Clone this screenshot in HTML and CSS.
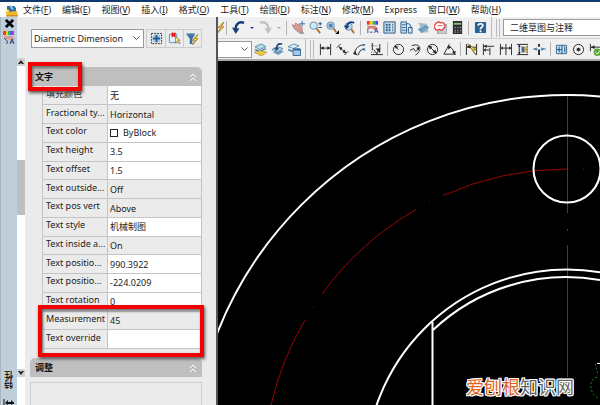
FILE: index.html
```html
<!DOCTYPE html>
<html lang="zh-CN">
<head>
<meta charset="utf-8">
<title>AutoCAD</title>
<link rel="stylesheet" href="styles.css">
</head>
<body>
<div class="app">
  <nav class="menubar">
    <svg class="app-icon" viewBox="0 0 12 13"><path d="M1 2h7l2 2v5H1z" fill="#2d6ca5"/><path d="M3 1l3 1 2 4-3-1z" fill="#8fc2e6"/><path d="M0 5l3 1v6H0z" fill="#ffe57a"/><path d="M0 8l11-1 1 5H1z" fill="#f3b72e"/><path d="M0 12h12" stroke="#a87010"/></svg>
    <a href="#">文件(<u>F</u>)</a>
    <a href="#">编辑(<u>E</u>)</a>
    <a href="#">视图(<u>V</u>)</a>
    <a href="#">插入(<u>I</u>)</a>
    <a href="#">格式(<u>O</u>)</a>
    <a href="#">工具(<u>T</u>)</a>
    <a href="#">绘图(<u>D</u>)</a>
    <a href="#">标注(<u>N</u>)</a>
    <a href="#">修改(<u>M</u>)</a>
    <a href="#">Express</a>
    <a href="#">窗口(<u>W</u>)</a>
    <a href="#">帮助(<u>H</u>)</a>
  </nav>
  <div class="workspace">
    <aside class="palette">
      <div class="palette-title">
        <button aria-label="关闭"><svg viewBox="0 0 10 10"><path d="M1 1l8 8M9 1L1 9" stroke="#050505" stroke-width="3"/></svg></button>
        <svg class="props-icon" viewBox="0 0 12 14"><path d="M0 0h3v4H0z" fill="#f33"/><path d="M3 0h2v4H3z" fill="#fc0"/><path d="M5 0h2v4H5z" fill="#2b4"/><path d="M7 0h2v4H7z" fill="#27e"/><path d="M9 0h2v4H9z" fill="#b3d"/><path d="M1 5h8l3 3-3 2-3-2-4 1z" fill="#d59a96"/><path d="M1 7l4 4M3 12h2M7 13l2-5 2 5M8 11h3" stroke="#36426b" fill="none"/></svg>
        <span class="vertical-title">特性</span>
        <svg class="dock-icon" viewBox="0 0 12 6"><path d="M1 0v6" stroke="#111"/><path d="M2 4l3-3v5zM11 4L8 1v5z" fill="#111"/><path d="M3 4h8" stroke="#111" stroke-width="2"/></svg>
      </div>
      <div class="scroll">
        <button aria-label="向上"><svg viewBox="0 0 8 8"><path d="M1 6l3-4 3 4H5L4 5 3 6z" fill="#222"/></svg></button>
        <div class="track"><div class="thumb"></div></div>
        <button aria-label="向下"><svg viewBox="0 0 8 8"><path d="M1 2l3 4 3-4H5L4 3 3 2z" fill="#222"/></svg></button>
      </div>
      <div class="properties">
        <div class="picker">
          <select aria-label="对象类型"><option>Diametric Dimension</option></select>
          <div class="picker-tools">
            <button aria-label="切换"><svg viewBox="0 0 14 14"><path d="M1.500 1.500h11v11h-11z" fill="none" stroke="#333" stroke-dasharray="2 1"/><path d="M3 3h8v8H3z" fill="#a9cbe8"/><path d="M7 3v8M3 7h8" stroke="#245b91" stroke-width="2"/></svg></button>
            <button aria-label="选择对象"><svg viewBox="0 0 14 14"><path d="M1.500 2.500h8v9h-8z" fill="#e4eef6" stroke="#6689a5"/><path d="M4 1l4 4M8 1L4 5" stroke="#e11" stroke-width="2"/><path d="M8 5v7l2-2 2 3 1-1-2-3h2z" fill="#ffe68a" stroke="#555" stroke-width=".6"/></svg></button>
            <button aria-label="快速选择"><svg viewBox="0 0 14 14"><path d="M0 2q5-2 10 0L7 7v6H4V7z" fill="#3c719d"/><path d="M1 2h8" stroke="#8db8d8"/><path d="M12 3L7 9h3l-3 5 6-7h-3l3-4z" fill="#f8d43c" stroke="#98700c" stroke-width=".7"/></svg></button>
          </div>
        </div>
        <section>
          <h2 class="group-title">文字<svg viewBox="0 0 8 10"><path d="M1 5l3-3 3 3M1 9l3-3 3 3"/></svg></h2>
          <table>
            <tr><th><label for="fill">填充颜色</label></th><td><input id="fill" value="无"></td></tr>
            <tr class="fixed"><th>Fractional ty...</th><td>Horizontal</td></tr>
            <tr><th><label for="color">Text color</label></th><td><div class="color-value"><span class="swatch"></span><input id="color" value="ByBlock"></div></td></tr>
            <tr><th><label for="height">Text height</label></th><td><input id="height" value="3.5"></td></tr>
            <tr><th><label for="offset">Text offset</label></th><td><input id="offset" value="1.5"></td></tr>
            <tr class="fixed"><th>Text outside...</th><td>Off</td></tr>
            <tr class="fixed"><th>Text pos vert</th><td>Above</td></tr>
            <tr><th><label for="style">Text style</label></th><td><input id="style" value="机械制图"></td></tr>
            <tr class="fixed"><th>Text inside a...</th><td>On</td></tr>
            <tr><th><label for="posx">Text positio...</label></th><td><input id="posx" value="990.3922"></td></tr>
            <tr><th><label for="posy">Text positio...</label></th><td><input id="posy" value="-224.0209"></td></tr>
            <tr><th><label for="rotation">Text rotation</label></th><td><input id="rotation" value="0"></td></tr>
            <tr class="fixed"><th>Measurement</th><td>45</td></tr>
            <tr><th><label for="override">Text override</label></th><td><input id="override" value=""></td></tr>
          </table>
        </section>
        <section class="fit-group">
          <h2 class="group-title">调整<svg viewBox="0 0 8 10"><path d="M1 5l3-3 3 3M1 9l3-3 3 3"/></svg></h2>
          <div class="hint"></div>
        </section>
      </div>
    </aside>
    <main>
      <div class="toolbar standard">
        <button class="half" aria-label="闪电"><svg viewBox="7 0 7 14"><path d="M13 1L7 7h3l-3 6 7-7h-3l3-5z" fill="#f6c531" stroke="#806018" stroke-width=".7"/></svg></button>
        <i class="sep"></i>
        <button aria-label="放弃"><svg viewBox="0 0 14 14"><path d="M13 2C8 0 4 3 4 8" fill="none" stroke="#173f7c" stroke-width="2.500"/><path d="M0 7l8 1-4 6z" fill="#173f7c"/></svg></button>
        <button class="drop" aria-label="放弃列表"><svg viewBox="0 0 4 4"><path d="M0 1h4L2 3z" fill="#173f7c"/></svg></button>
        <button aria-label="重做"><svg viewBox="0 0 14 14"><path d="M1 2c5-2 9 1 9 6" fill="none" stroke="#bfc3c6" stroke-width="2.500"/><path d="M6 8l8-1-4 7z" fill="#bfc3c6"/></svg></button>
        <button class="drop" aria-label="重做列表"><svg viewBox="0 0 4 4"><path d="M0 1h4L2 3z" fill="#aaa"/></svg></button>
        <i class="sep"></i>
        <button aria-label="平移"><svg viewBox="0 0 14 14"><path d="M0 4l3 1 1-3 2 2 2-1 3 5v4H7L3 9z" fill="#d59a93" stroke="#8f5c59" stroke-width=".6"/><path d="M11 0v6M8 3h6M8 13h5" stroke="#3c6894"/></svg></button>
        <button aria-label="实时缩放"><svg viewBox="0 0 14 14"><circle cx="5" cy="5" r="4" fill="#cde7f7" stroke="#668da9"/><path d="M8 8l4 5" stroke="#ae7038" stroke-width="2"/><path d="M12 1v4M10 3h4M10 7h4" stroke="#234f82"/></svg></button>
        <button aria-label="窗口缩放"><svg viewBox="0 0 14 14"><circle cx="5" cy="5" r="4" fill="#bbd6e9" stroke="#668da9"/><path d="M3 3h4v4H3z" fill="#4a82b5"/><path d="M8 8l3 4" stroke="#ae7038" stroke-width="2"/><path d="M14 10v4h-4z"/></svg></button>
        <button aria-label="缩放上一个"><svg viewBox="0 0 14 14"><circle cx="6" cy="6" r="4" fill="#bbd6e9" stroke="#668da9"/><path d="M9 9l3 4" stroke="#ae7038" stroke-width="2"/><path d="M12 2C8 0 5 2 4 6" fill="none" stroke="#173f7c" stroke-width="2"/><path d="M1 5h6l-3 4z" fill="#173f7c"/></svg></button>
        <i class="sep"></i>
        <button aria-label="特性"><svg viewBox="0 0 14 14"><path d="M1 0h3v4H1z" fill="#e33"/><path d="M4 0h3v4H4z" fill="#fc0"/><path d="M7 0h3v4H7z" fill="#3b6"/><path d="M10 0h3v4h-3z" fill="#63d"/><path d="M1 5h9l3 3-3 2-4-2-4 1z" fill="#d8847e"/><path d="M2 8v5M4 12h3M9 13l2-5 2 5M10 11h3" stroke="#354e86" fill="none"/></svg></button>
        <button aria-label="设计中心"><svg viewBox="0 0 14 14"><path d="M1 1h12v12H1z" fill="#d5e7f5" stroke="#234d75"/><path d="M3 4h2M6 4h2M10 4h1M3 7h2M6 7h2M10 7h1M3 10h2M6 10h2M10 10h1" stroke="#245c8c" stroke-width="2"/></svg></button>
        <button aria-label="工具选项板"><svg viewBox="0 0 14 14"><path d="M1 1h6v12H1z" fill="#c8dff0" stroke="#315e8a"/><path d="M2 4h4M2 7h4M2 10h4" stroke="#396b99"/><path d="M7 3q5-1 5 5M9 7h4v6H9z" fill="#d9e7f2" stroke="#245485"/></svg></button>
        <button aria-label="图纸集"><svg viewBox="0 0 14 14"><path d="M1 2l9 1 3 4-9-1z" fill="#9eb9c9"/><path d="M1 9l8-4 4 2-8 6z" fill="#438fc1"/><path d="M3 5l9 2v5l-8 1z" fill="#87a6b8" opacity=".7"/></svg></button>
        <button aria-label="标记集"><svg viewBox="0 0 14 14"><path d="M4 4h10v10H4z" fill="#c6cbd0" stroke="#89939c"/><path d="M3 2q2-2 4 0 4-1 4 2 2 3-1 4-1 3-4 1-4 2-5-1-2-3 0-4z" fill="#fff" stroke="#e44848" stroke-width="1.500"/><path d="M4 5h5" stroke="#e44848"/></svg></button>
        <button aria-label="计算器"><svg viewBox="0 0 14 14"><path d="M2 0h10v14H2z" fill="#2e3031"/><path d="M3 2h8v2H3z" fill="#86bf79"/><path d="M4 7h1M7 7h1M10 7h1M4 10h1M7 10h1M10 10h1M4 12h1M7 12h1" stroke="#e8e8e8"/><path d="M10 12h1" stroke="#f44"/></svg></button>
        <i class="sep"></i>
        <button aria-label="帮助"><svg viewBox="0 0 14 14"><rect x="1" y="1" width="12" height="12" rx="1" fill="#286395"/><path d="M4.500 5q0-2 2.500-2t2.500 2q0 1-2.500 3v1M7 10v2" fill="none" stroke="#fff" stroke-width="1.800"/></svg></button>
        <i class="edge"></i><i class="grip"></i>
        <input class="workspace-name" aria-label="工作空间" value="二维草图与注释">
      </div>
      <div class="toolbar dimension">
        <select class="layer" aria-label="图层"><option></option></select>
        <button aria-label="图层置为当前"><svg viewBox="0 0 14 14"><path d="M1 4l7-3 5 3-7 3z" fill="#b8d9ec" stroke="#5c8dab"/><path d="M1 7l5 2 7-3" fill="none" stroke="#4a81a5" stroke-width="1.500"/><path d="M0 10l7-2 7 2-6 4z" fill="#e6c849" stroke="#937b22" stroke-width=".5"/></svg></button>
        <button aria-label="上一个图层"><svg viewBox="0 0 14 14"><path d="M2 10l5-3 7 2-6 4z" fill="#6b9dbc"/><path d="M1 7l6-3 6 2-6 4z" fill="#b8d9ec" stroke="#5c8dab"/><path d="M12 1Q6 0 6 6" fill="none" stroke="#294e82" stroke-width="2"/><path d="M3 5h6l-3 4z" fill="#294e82"/></svg></button>
        <button aria-label="图层状态"><svg viewBox="0 0 14 14"><path d="M0 4l6-3 6 2-6 3z" fill="#d9ecf7" stroke="#5c8dab"/><path d="M0 7l5 2" stroke="#5c8dab" stroke-width="2"/><path d="M5.500 6.500h8v7h-8z" fill="#a9c8e0" stroke="#2b638f"/><path d="M6 7h7" stroke="#2565a1" stroke-width="2"/></svg></button>
        <i class="edge"></i><i class="grip"></i>
        <button aria-label="线性"><svg viewBox="0 0 14 14" class="ink"><path d="M1.500 1v12M12.500 1v12M2 5.500h10"/><path d="M2 5.500l3-2v4zM12 5.500l-3-2v4z" class="solid"/></svg></button>
        <button aria-label="对齐"><svg viewBox="0 0 14 14" class="ink"><path d="M1 5l4-4M9 13l4-4M3 4l8 7"/><path d="M3 4l4 1-2 3zM11 11l-4-1 2-3z" class="solid"/></svg></button>
        <button aria-label="弧长"><svg viewBox="0 0 14 14" class="ink"><path d="M2 12C2 6 6 2 12 2M6 13q0-5 6-7M0 11l5 2"/><path d="M1 12l1-4 2 4z" class="solid"/><path d="M11 1h2v2h-2zM11 6h2v2h-2z" fill="#2375ad" stroke="none"/></svg></button>
        <button aria-label="坐标"><svg viewBox="0 0 14 14" class="ink"><path d="M2.500 0v8M10.500 1v6M1 12.500h13M4 7l4 5M10 6l-3 6"/><path d="M1 3h8M1 10h6" stroke="#397ba8" stroke-dasharray="1 1"/><path d="M6 6h5v5z" class="solid"/></svg></button>
        <i class="sep"></i>
        <button aria-label="半径"><svg viewBox="0 0 14 14" class="ink"><circle cx="7" cy="7" r="5.500"/><path d="M7 7L3 4"/><path d="M3 3l4 1-3 2z" class="solid"/></svg></button>
        <button aria-label="折弯"><svg viewBox="0 0 14 14" class="ink"><path d="M3 3c9-4 12 5 4 10M1 8l4-2 2 3 4-3"/><path d="M8 5l4-1-2 4z" class="solid"/></svg></button>
        <button aria-label="直径"><svg viewBox="0 0 14 14" class="ink"><circle cx="7" cy="7" r="5.500"/><path d="M3 3l8 8"/><path d="M3 3l4 1-3 3zM11 11l-4-1 3-3z" class="solid"/></svg></button>
        <button aria-label="角度"><svg viewBox="0 0 14 14" class="ink"><path d="M7 1L1 12h13M6 4q5 1 6 7"/><path d="M5 3l4 1-3 3zM10 9h4l-2 4z" class="solid"/></svg></button>
        <i class="sep"></i>
        <button aria-label="快速标注"><svg viewBox="0 0 14 14" class="ink"><path d="M1.500 1v12M12.500 1v12M2 4.500h10"/><path d="M3 1l9 6-4 1 4 5z" fill="#f0d534" stroke="#867612"/><path d="M2 4l4-2v4z" class="solid"/></svg></button>
        <button aria-label="基线"><svg viewBox="0 0 14 14" class="ink"><path d="M1.500 1v12M8.500 5v8M2 3.500h11M2 7.500h6"/><path d="M2 3.500l3-2v4zM2 7.500l2-2v4z" class="solid"/></svg></button>
        <button aria-label="连续"><svg viewBox="0 0 14 14" class="ink"><path d="M1.500 1v12M7.500 1v12M13.500 1v12M2 5.500h11"/><path d="M2 5.500l2-2v4zM13 5.500l-2-2v4z" class="solid"/></svg></button>
        <button aria-label="等距标注"><svg viewBox="0 0 14 14" class="ink"><path d="M1 1.500h12M1 12.500h12M3.500 2v10"/><path d="M6 4h6v6H6z" fill="#e3b85e" stroke="none"/><path d="M6 4h3v6H6z" fill="#346b9a" stroke="none"/><path d="M12 3v8" stroke-dasharray="2 1"/><path d="M2 4l2-2 1 2zM2 10l2 2 1-2z" class="solid"/></svg></button>
        <button aria-label="折断标注"><svg viewBox="0 0 14 14" class="ink"><path d="M6.500 1v3M6.500 7v6" stroke-width="2"/><path d="M0 6.500h5M9 6.500h5" stroke="#3d7ead"/><path d="M1 6.500l3-2v4zM12 6.500l-3-2v4z" fill="#3d7ead" stroke="none"/></svg></button>
        <i class="sep"></i>
        <button aria-label="公差"><svg viewBox="0 0 14 14"><path d="M1.500 2.500h11v9h-11z" fill="#c5dff1" stroke="#34668f"/><path d="M7.500 2v10M4.500 4v6M2 7h5M10.500 4v6" stroke="#174d7b"/></svg></button>
        <button aria-label="圆心标记"><svg viewBox="0 0 14 14" class="ink"><circle cx="7" cy="7" r="5.500"/><path d="M7 5v4M5 7h4" stroke-width="2"/></svg></button>
        <button aria-label="检验"><svg viewBox="0 0 14 14" class="ink"><path d="M1.500 1v8M2 4.500h12"/><path d="M2 4.500l4-2v4z" class="solid"/><circle cx="9" cy="10" r="4" fill="#58a938" stroke="none"/><path d="M7 10l2 2 3-4" stroke="#fff"/></svg></button>
      </div>
      <div class="canvas">
        <svg viewBox="218 61 382 344" preserveAspectRatio="xMinYMin slice">
          <g fill="none" stroke="#c40808" stroke-width="1">
            <path d="M567.500 96v117M567.500 229v2M567.500 245v132"/>
            <path d="M567 169A302 302 0 0 0 443 195.600M416 209.600A302 302 0 0 0 322 294M305 320A302 302 0 0 0 271 405" stroke="#980505"/>
            <path d="M429 202h1M313 307h1M583 169h1M599 170h1" stroke="#980505"/>
          </g>
          <g fill="none" stroke="#fff" stroke-width="2">
            <circle cx="567" cy="471" r="376"/>
            <circle cx="567" cy="169" r="33.500"/>
            <circle cx="567" cy="471" r="201.500"/>
            <path d="M433 330A194 194 0 0 1 600 280M432.500 322v83"/>
            <path d="M597 363.500h3" stroke-width="1"/>
          </g>
          <path d="M595 364q2 5 3 12M597 377c-8 2-9 15 1 21" fill="none" stroke="#079a18" stroke-dasharray="2 2"/>
        </svg>
        <div class="watermark"><span>爱刨根</span>知识网</div>
      </div>
    </main>
  </div>
  <div class="mark mark-heading"></div>
  <div class="mark mark-override"></div>
</div>
</body>
</html>
```
FILE: styles.css
```css
* { box-sizing: border-box; }
body {
  margin: 0;
  font: 9px/12px "Noto Sans", "Noto Sans CJK SC", sans-serif;
  color: #222;
}
button, input, select { font: inherit; color: inherit; }
button {
  display: flex;
  align-items: center;
  justify-content: center;
  flex: none;
  padding: 0;
  border: 0;
  background: none;
}
svg { display: block; }
.app {
  position: relative;
  display: flex;
  flex-direction: column;
  height: 100vh;
  overflow: hidden;
  background: #f0f0f0;
}
.menubar {
  display: flex;
  flex: none;
  align-items: center;
  gap: 11px;
  height: 17px;
  padding: 1px 6px 0;
  border-top: 2px solid #103a6e;
  background: #fff;
  white-space: nowrap;
}
.menubar a { color: #222; text-decoration: none; }
.app-icon { width: 12px; height: 13px; margin-right: -6px; }
.workspace { display: flex; flex: 1; min-height: 0; }

.palette {
  display: flex;
  flex: none;
  width: 218px;
  border-right: 2px solid #555;
  background: #ebebeb;
  overflow: hidden;
}
.palette-title {
  display: flex;
  flex: none;
  flex-direction: column;
  align-items: center;
  width: 17px;
  padding-top: 2px;
  border-left: 1px solid #aab4bd;
  background: #bfcedb;
}
.palette-title button svg { width: 9px; height: 9px; }
.props-icon { width: 12px; height: 14px; margin-top: 3px; }
.vertical-title {
  margin-top: auto;
  writing-mode: vertical-rl;
  transform: rotate(180deg);
  font-weight: 500;
  color: #000;
}
.dock-icon { width: 12px; height: 6px; margin-top: 10px; }
.scroll {
  display: flex;
  flex: none;
  flex-direction: column;
  width: 8px;
  padding: 41px 0 28px;
  background: linear-gradient(#ebebeb 41px, #fff 41px);
}
.scroll button { width: 8px; height: 8px; background: #d2d2d2; }
.scroll svg { width: 8px; height: 8px; }
.track { flex: 1; background: #fff; }
.thumb { height: 18%; margin-top: 94px; background: #bfbfbf; }
.properties { flex: 1; min-width: 0; padding: 12px 14px 0 5px; }
.picker {
  display: flex;
  justify-content: space-between;
  height: 38px;
  padding-left: 1px;
}
select {
  appearance: none;
  border: 1px solid #999;
  border-radius: 0;
  background: #fff;
}
.picker select {
  width: 113px;
  height: 19px;
  padding: 0 2px;
  background: linear-gradient(45deg, transparent 50%, transparent 50%);
  background-color: #fff;
}
.picker select, .layer {
  background: #fff url("data:image/svg+xml,%3Csvg xmlns='http://www.w3.org/2000/svg' width='7' height='5'%3E%3Cpath d='M.5.5l3 3 3-3' fill='none' stroke='%23555'/%3E%3C/svg%3E") no-repeat right 3px center;
}
.picker-tools { display: flex; height: 19px; border: 1px solid #ccc; }
.picker-tools button { width: 18px; }
.picker-tools button + button { border-left: 1px solid #ccc; }
.picker-tools svg { width: 13px; height: 13px; }
.group-title {
  display: flex;
  align-items: center;
  justify-content: space-between;
  height: 19px;
  margin: 0;
  padding: 0 5px;
  border-radius: 5px 5px 0 0;
  background: #bfbfbf;
  font-size: 9px;
  font-weight: 700;
  color: #111;
}
.group-title svg { width: 8px; height: 10px; fill: none; stroke: #fff; }
table {
  width: 160px;
  height: 263px;
  margin-left: auto;
  border-collapse: collapse;
  table-layout: fixed;
}
th, td {
  height: 18px;
  padding: 0 0 0 2px;
  border: 1px solid #c4c4c4;
  border-top: 0;
  text-align: left;
  vertical-align: middle;
  white-space: nowrap;
  line-height: 12px;
}
th { width: 65px; padding: 0 0 3px 3px; font-weight: 400; background: #ebebeb; }
td { background: #fff; }
.fixed td { padding-top: 2px; background: #ebebeb; }
td input {
  display: block;
  width: 100%;
  height: 14px;
  padding: 0;
  border: 0;
  background: none;
}
.color-value { display: flex; align-items: center; gap: 5px; }
.color-value input { min-width: 0; }
.swatch { flex: none; width: 8px; height: 8px; border: 1px solid #222; background: #fff; }
.fit-group { margin-top: 9px; }
.hint { height: 40px; margin-top: 5px; border: 1px solid #d0d0d0; }

main { display: flex; flex: 1; flex-direction: column; min-width: 0; }
.toolbar {
  display: flex;
  flex: none;
  align-items: center;
  height: 21px;
  overflow: hidden;
}
.toolbar button { width: 17px; height: 17px; }
.toolbar svg { width: 13px; height: 13px; }
.toolbar .half { width: 6px; }
.toolbar .half svg { width: 6px; }
.toolbar .drop { width: 10px; }
.toolbar .drop svg { width: 4px; height: 4px; }
.ink { fill: none; stroke: #222; }
.solid { fill: #222; stroke: none; }
.sep { flex: none; width: 1px; height: 14px; margin: 0 2px; background: #b4b4b4; }
.standard .sep { margin: 0 3px 0 2px; }
.edge { flex: none; width: 1px; height: 100%; margin: 0 4px 0 2px; background: #bbb; }
.grip {
  flex: none;
  width: 4px;
  height: 18px;
  margin-right: 3px;
  border: 1px solid #bbb;
  border-width: 0 1px;
}
.workspace-name {
  flex: 1;
  min-width: 0;
  height: 17px;
  padding: 0 6px;
  border: 1px solid #999;
  border-right: 0;
  background: #fff;
}
.dimension { height: 23px; border-top: 1px solid #d0d0d0; border-bottom: 2px solid #a8a8a8; }
.layer { flex: none; width: 34px; height: 17px; border-left: 0; }
.canvas { position: relative; flex: 1; min-height: 0; background: #000; }
.canvas svg { width: 100%; height: 100%; }
.watermark {
  position: absolute;
  right: 26px;
  bottom: 8px;
  font: 18px/22px "Noto Sans CJK SC", sans-serif;
  color: #666;
  text-shadow: 1px 0 #fff, -1px 0 #fff, 0 1px #fff, 0 -1px #fff, 1px 1px #fff, -1px -1px #fff, 1px -1px #fff, -1px 1px #fff;
}
.watermark span { color: #df6424; }

.mark {
  position: absolute;
  border: 4px solid #f40000;
  box-shadow: 1px 2px 3px #555, inset 1px 2px 3px #666;
}
.mark-heading { left: 28px; top: 62px; width: 54px; height: 29px; }
.mark-override { left: 38px; top: 305px; width: 166px; height: 52px; }
```
